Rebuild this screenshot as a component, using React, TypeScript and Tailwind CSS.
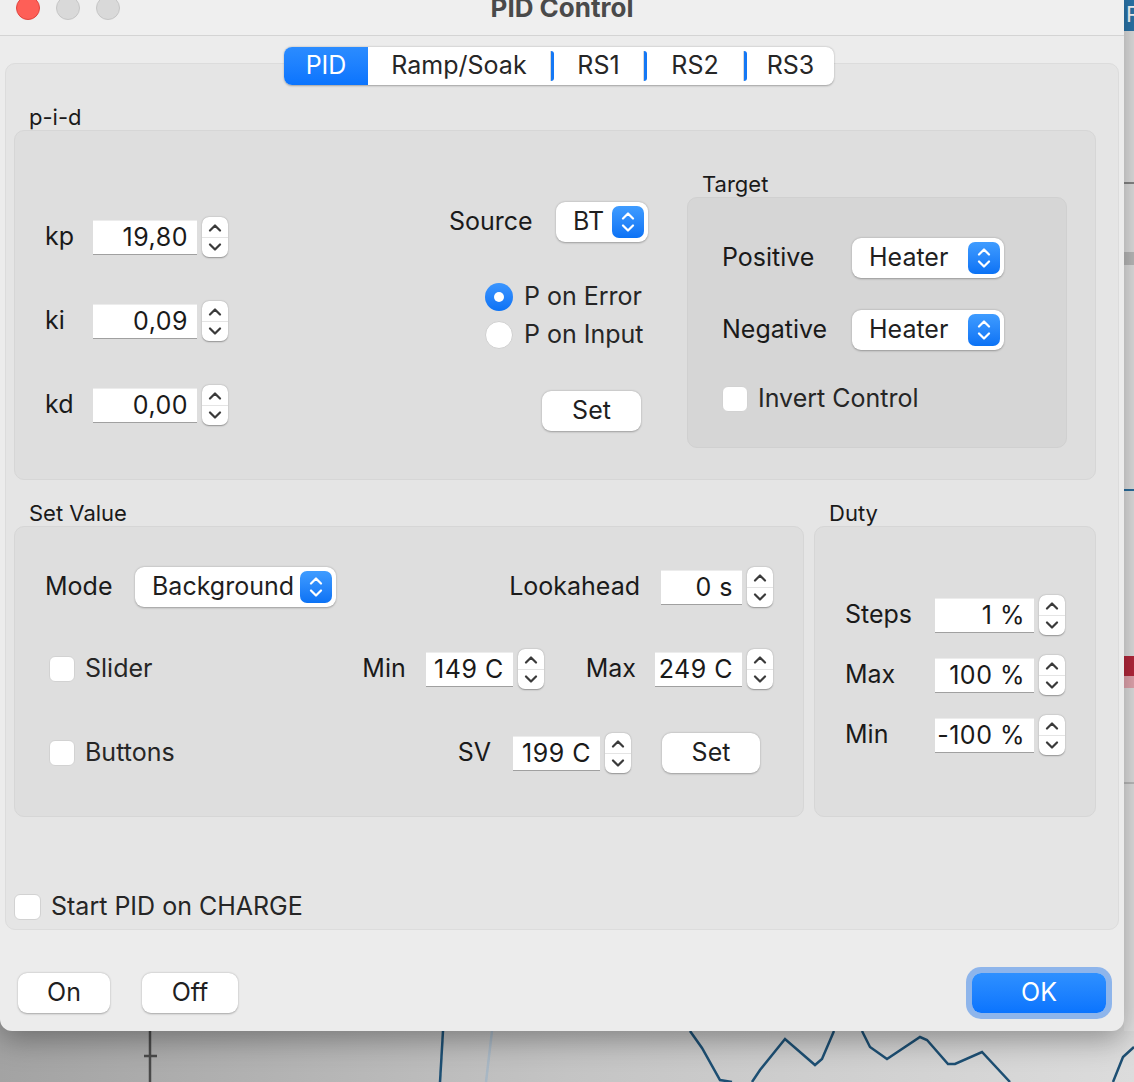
import React from 'react';

function Chevron({ dir, color = '#3a3a3a' }: { dir: 'up' | 'down'; color?: string }) {
  return (
    <svg width="14" height="8" viewBox="0 0 14 8">
      <path
        d={dir === 'up' ? 'M2 6.5 L7 1.5 L12 6.5' : 'M2 1.5 L7 6.5 L12 1.5'}
        stroke={color}
        strokeWidth="2.2"
        fill="none"
        strokeLinecap="round"
        strokeLinejoin="round"
      />
    </svg>
  );
}

function Spinner() {
  return (
    <div className="ml-[5px] flex h-[40px] w-[26px] shrink-0 flex-col items-center justify-center rounded-[7px] bg-white shadow-[0_0.5px_1.5px_rgba(0,0,0,0.35)]">
      <Chevron dir="up" />
      <div className="my-[5px] h-px w-full bg-[#e4e4e4]" />
      <Chevron dir="down" />
    </div>
  );
}

function NumField({ value, w }: { value: string; w: string }) {
  return (
    <div className="flex items-center">
      <div
        className={`${w} flex h-[34px] items-center justify-end border-t border-[#ececec] bg-white pr-[9px] text-[25px] tracking-[0.5px] text-[#1a1a1a] shadow-[0_1px_0_rgba(0,0,0,0.28)]`}
      >
        {value}
      </div>
      <Spinner />
    </div>
  );
}

function Combo({ value, w }: { value: string; w: string }) {
  return (
    <div
      className={`${w} flex h-[40px] items-center justify-between rounded-[9px] bg-white pl-[17px] pr-[4px] shadow-[0_0.5px_2px_rgba(0,0,0,0.3)]`}
    >
      <span className="text-[25px] text-[#1f1f1f]">{value}</span>
      <div className="flex h-[32px] w-[32px] shrink-0 flex-col items-center justify-center gap-[4px] rounded-[7px] bg-gradient-to-b from-[#3f9cff] to-[#0a72f5]">
        <Chevron dir="up" color="#ffffff" />
        <Chevron dir="down" color="#ffffff" />
      </div>
    </div>
  );
}

function Check() {
  return <div className="h-[26px] w-[26px] shrink-0 rounded-[6px] border border-[#d2d2d2] bg-white" />;
}

function Btn({ label, w }: { label: string; w: string }) {
  return (
    <div
      className={`${w} flex h-[40px] items-center justify-center rounded-[9px] bg-white text-[25px] text-[#1f1f1f] shadow-[0_0.5px_2px_rgba(0,0,0,0.3)]`}
    >
      {label}
    </div>
  );
}

function Desktop() {
  return (
    <svg className="absolute inset-0" width="1134" height="1082" viewBox="0 0 1134 1082">
      <rect x="1124" y="0" width="10" height="31" fill="#2b77ad" />
      <text x="1126" y="22" fill="#ffffff" fontSize="22" fontFamily="Inter, sans-serif">R</text>
      <rect x="1124" y="31" width="10" height="1000" fill="#e3e3e3" />
      <line x1="1124" y1="183" x2="1134" y2="183" stroke="#6a6a6a" strokeWidth="1.5" />
      <rect x="1124" y="252" width="10" height="13" fill="#bdbdbd" />
      <line x1="1124" y1="490" x2="1134" y2="490" stroke="#2a6fa0" strokeWidth="2" />
      <rect x="1124" y="656" width="10" height="20" fill="#b7283c" />
      <rect x="1124" y="676" width="10" height="12" fill="#e7a9b2" />
      <line x1="1124" y1="783" x2="1134" y2="783" stroke="#9a9a9a" strokeWidth="1" />
      <line x1="150" y1="1031" x2="150" y2="1082" stroke="#4a4a4a" strokeWidth="2.5" />
      <line x1="144" y1="1056" x2="157" y2="1056" stroke="#4a4a4a" strokeWidth="2.5" />
      <line x1="440" y1="1082" x2="443" y2="1031" stroke="#1d4f73" strokeWidth="2.5" />
      <line x1="486" y1="1082" x2="492" y2="1031" stroke="#a8b7c4" strokeWidth="2.5" />
      <polyline
        points="690,1031 702,1048 720,1080 732,1082"
        fill="none"
        stroke="#1d4f73"
        strokeWidth="2.5"
      />
      <polyline
        points="752,1082 760,1070 785,1039 815,1065 822,1059 834,1031"
        fill="none"
        stroke="#1d4f73"
        strokeWidth="2.5"
      />
      <polyline
        points="862,1031 870,1047 887,1059 920,1037 927,1040 948,1064 955,1064 982,1052 1010,1082"
        fill="none"
        stroke="#1d4f73"
        strokeWidth="2.5"
      />
      <polyline points="1113,1082 1123,1057 1134,1047" fill="none" stroke="#1d4f73" strokeWidth="2.5" />
    </svg>
  );
}

export default function App() {
  return (
    <div className="relative h-[1082px] w-[1134px] overflow-hidden bg-gradient-to-r from-[#a3a3a3] via-[#c4c4c4] to-[#dcdcdc] font-['Inter',sans-serif] text-[#1a1a1a]">
      <Desktop />
      <div className="relative z-10 -mt-[20px] flex h-[1051px] w-[1124px] flex-col rounded-[12px] bg-[#ececec] shadow-[0_8px_30px_rgba(0,0,0,0.35)]">
        {/* title bar */}
        <div className="flex h-[56px] items-center rounded-t-[12px] border-b border-[#d4d4d4] bg-[#efefef]">
          <div className="flex w-[130px] items-center gap-[16px] pl-[16px]">
            <div className="h-[24px] w-[24px] rounded-full border border-[#e0443e] bg-[#fe5f57]" />
            <div className="h-[24px] w-[24px] rounded-full border border-[#c6c6c6] bg-[#d9d9d9]" />
            <div className="h-[24px] w-[24px] rounded-full border border-[#c6c6c6] bg-[#d9d9d9]" />
          </div>
          <div className="flex-1 text-center text-[26px] font-bold text-[#4a4a4a]">PID Control</div>
          <div className="w-[130px]" />
        </div>

        <div className="px-[5px] pt-[11px]">
          {/* tabs */}
          <div className="relative z-10 -mb-[22px] flex justify-center pr-[6px]">
            <div className="flex h-[38px] items-stretch rounded-[8px] bg-white text-[25px] text-[#262626] shadow-[0_0.5px_2px_rgba(0,0,0,0.3)]">
              <div className="flex w-[84px] items-center justify-center rounded-l-[8px] bg-gradient-to-b from-[#2b8cff] to-[#0a74fe] text-white">
                PID
              </div>
              <div className="flex w-[182px] items-center justify-center">Ramp/Soak</div>
              <div className="flex w-[93px] items-center">
                <div className="h-[30px] w-px bg-[#d8d8d8]" />
                <div className="h-[30px] w-[3px] rounded-r-full bg-[#1478f5]" />
                <div className="flex-1 text-center">RS1</div>
              </div>
              <div className="flex w-[100px] items-center">
                <div className="h-[30px] w-px bg-[#d8d8d8]" />
                <div className="h-[30px] w-[3px] rounded-r-full bg-[#1478f5]" />
                <div className="flex-1 text-center">RS2</div>
              </div>
              <div className="flex w-[91px] items-center">
                <div className="h-[30px] w-px bg-[#d8d8d8]" />
                <div className="h-[30px] w-[3px] rounded-r-full bg-[#1478f5]" />
                <div className="flex-1 text-center">RS3</div>
              </div>
            </div>
          </div>

          {/* tab pane */}
          <div className="flex h-[867px] flex-col rounded-[10px] border border-[#dcdcdc] bg-[#e5e5e5] pb-[9px] pl-[8px] pr-[22px] pt-[41px]">
            <div className="h-[25px] pl-[15px] text-[22px] leading-[25px]">p-i-d</div>

            {/* p-i-d group */}
            <div className="flex h-[350px] items-start rounded-[10px] border border-[#d6d6d6] bg-[#dedede]">
              <div className="flex flex-col gap-[44px] pl-[30px] pt-[86px]">
                {[
                  ['kp', '19,80'],
                  ['ki', '0,09'],
                  ['kd', '0,00'],
                ].map(([l, v]) => (
                  <div key={l} className="flex h-[40px] items-center">
                    <div className="w-[48px] text-[25px]">{l}</div>
                    <NumField value={v} w="w-[104px]" />
                  </div>
                ))}
              </div>

              <div className="ml-[221px] flex w-[215px] flex-col pt-[71px]">
                <div className="flex h-[39px] items-center">
                  <div className="w-[107px] text-[25px]">Source</div>
                  <Combo value="BT" w="w-[92px]" />
                </div>
                <div className="mt-[37px] flex h-[38px] items-center pl-[36px]">
                  <div className="flex h-[28px] w-[28px] items-center justify-center rounded-full bg-gradient-to-b from-[#3a95ff] to-[#0a72f5]">
                    <div className="h-[10px] w-[10px] rounded-full bg-white" />
                  </div>
                  <span className="ml-[11px] text-[25px] text-[#262626]">P on Error</span>
                </div>
                <div className="flex h-[38px] items-center pl-[36px]">
                  <div className="h-[28px] w-[28px] rounded-full border border-[#d0d0d0] bg-white" />
                  <span className="ml-[11px] text-[25px] text-[#262626]">P on Input</span>
                </div>
                <div className="mt-[37px] pl-[93px]">
                  <Btn label="Set" w="w-[99px]" />
                </div>
              </div>

              <div className="ml-[23px] flex flex-col pt-[41px]">
                <div className="h-[24px] pl-[15px] text-[22px] leading-[24px]">Target</div>
                <div className="mt-[1px] flex h-[251px] w-[380px] flex-col rounded-[10px] border border-[#d0d0d0] bg-[#d6d6d6] pl-[34px] pt-[40px]">
                  <div className="flex h-[40px] items-center">
                    <div className="w-[130px] text-[25px]">Positive</div>
                    <Combo value="Heater" w="w-[152px]" />
                  </div>
                  <div className="mt-[32px] flex h-[40px] items-center">
                    <div className="w-[130px] text-[25px]">Negative</div>
                    <Combo value="Heater" w="w-[152px]" />
                  </div>
                  <div className="mt-[36px] flex h-[26px] items-center">
                    <Check />
                    <span className="ml-[10px] text-[25px] text-[#262626]">Invert Control</span>
                  </div>
                </div>
              </div>
            </div>

            {/* Set Value / Duty labels */}
            <div className="mt-[21px] flex h-[24px] text-[22px] leading-[24px]">
              <div className="w-[800px] pl-[15px]">Set Value</div>
              <div className="pl-[15px]">Duty</div>
            </div>

            <div className="mt-[1px] flex gap-[10px]">
              {/* Set Value group */}
              <div className="flex h-[291px] w-[790px] flex-col rounded-[10px] border border-[#d6d6d6] bg-[#dedede] pl-[30px] pr-[30px] pt-[40px]">
                <div className="flex h-[40px] items-center">
                  <div className="w-[90px] text-[25px]">Mode</div>
                  <Combo value="Background" w="w-[201px]" />
                  <div className="flex-1" />
                  <div className="text-[25px]">Lookahead</div>
                  <div className="ml-[21px]">
                    <NumField value="0 s" w="w-[81px]" />
                  </div>
                </div>
                <div className="mt-[42px] flex h-[40px] items-center pl-[4px]">
                  <Check />
                  <span className="ml-[10px] text-[25px] text-[#262626]">Slider</span>
                  <div className="flex-1" />
                  <div className="text-[25px]">Min</div>
                  <div className="ml-[20px]">
                    <NumField value="149 C" w="w-[87px]" />
                  </div>
                  <div className="ml-[42px] text-[25px]">Max</div>
                  <div className="ml-[19px]">
                    <NumField value="249 C" w="w-[87px]" />
                  </div>
                </div>
                <div className="mt-[44px] flex h-[40px] items-center pl-[4px] pr-[13px]">
                  <Check />
                  <span className="ml-[10px] text-[25px] text-[#262626]">Buttons</span>
                  <div className="flex-1" />
                  <div className="text-[25px]">SV</div>
                  <div className="ml-[22px]">
                    <NumField value="199 C" w="w-[87px]" />
                  </div>
                  <div className="ml-[31px]">
                    <Btn label="Set" w="w-[98px]" />
                  </div>
                </div>
              </div>

              {/* Duty group */}
              <div className="flex h-[291px] w-[282px] flex-col gap-[20px] rounded-[10px] border border-[#d6d6d6] bg-[#dedede] pl-[30px] pt-[68px]">
                {[
                  ['Steps', '1 %'],
                  ['Max', '100 %'],
                  ['Min', '-100 %'],
                ].map(([l, v]) => (
                  <div key={l} className="flex h-[40px] items-center">
                    <div className="w-[90px] text-[25px]">{l}</div>
                    <NumField value={v} w="w-[99px]" />
                  </div>
                ))}
              </div>
            </div>

            <div className="flex-1" />
            <div className="flex h-[26px] items-center">
              <div className="h-[26px] w-[27px] rounded-[6px] border border-[#d2d2d2] bg-white" />
              <span className="ml-[10px] text-[25px] text-[#262626]">Start PID on CHARGE</span>
            </div>
          </div>
        </div>

        {/* bottom buttons */}
        <div className="mt-[43px] flex items-center px-[18px]">
          <Btn label="On" w="w-[92px]" />
          <div className="ml-[32px]">
            <Btn label="Off" w="w-[96px]" />
          </div>
          <div className="flex-1" />
          <div className="flex h-[40px] w-[134px] items-center justify-center rounded-[9px] bg-gradient-to-b from-[#2e90ff] to-[#0a74fe] text-[25px] text-white shadow-[0_0_0_6px_rgba(80,145,235,0.6)]">
            OK
          </div>
        </div>
      </div>
    </div>
  );
}
